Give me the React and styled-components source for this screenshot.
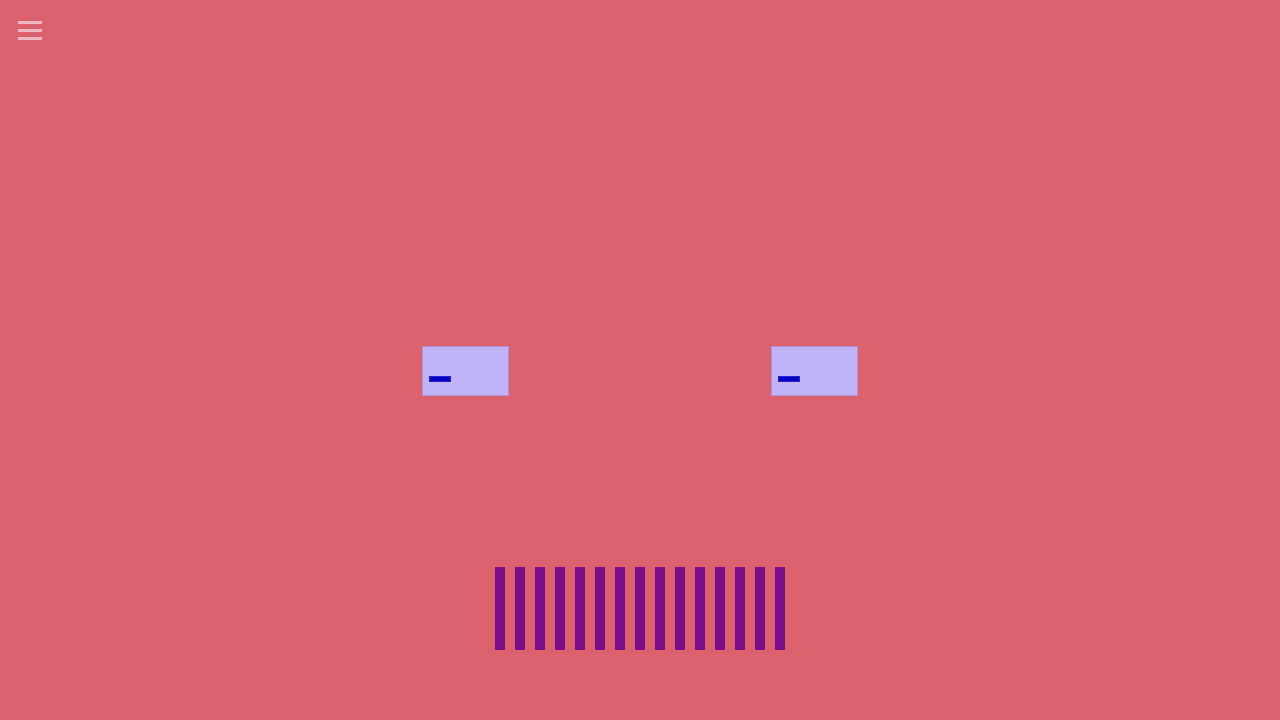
import React from 'react';
import styled, { createGlobalStyle } from 'styled-components';

const GlobalStyle = createGlobalStyle`
  html, body {
    margin: 0;
    padding: 0;
    background: #dc626e;
    font-family: 'Liberation Sans', Arial, sans-serif;
  }
`;

const Page = styled.div`
  display: flex;
  flex-direction: column;
  min-height: 100vh;
  background: #dc626e;
`;

const TopBar = styled.div`
  display: flex;
  padding: 21px 18px 0 18px;
`;

const MenuButton = styled.button`
  display: flex;
  flex-direction: column;
  gap: 5px;
  width: 24px;
  padding: 0;
  border: none;
  background: transparent;
  cursor: pointer;
`;

const MenuLine = styled.span`
  display: block;
  width: 24px;
  height: 3px;
  background: #f1b8c2;
`;

const Face = styled.div`
  display: flex;
  flex-direction: column;
  align-items: center;
`;

const EyesRow = styled.div`
  display: flex;
  justify-content: center;
  gap: 262px;
  margin-top: 306px;
`;

const Eye = styled.div`
  box-sizing: border-box;
  width: 87px;
  height: 50px;
  padding: 29px 0 0 6px;
  background: #c0b3f7;
  border: 1px solid #b38fd4;
`;

const Pupil = styled.div`
  box-sizing: border-box;
  width: 22px;
  height: 6px;
  background: #0000c2;
  border: 1px solid #2a22d0;
`;

const Mouth = styled.div`
  display: flex;
  gap: 10px;
  margin-top: 171px;
`;

const Tooth = styled.div`
  width: 10px;
  height: 83px;
  background: #7b0d8a;
`;

export default function App() {
  return (
    <>
      <GlobalStyle />
      <Page>
        <TopBar>
          <MenuButton aria-label="menu">
            <MenuLine />
            <MenuLine />
            <MenuLine />
          </MenuButton>
        </TopBar>
        <Face>
          <EyesRow>
            <Eye>
              <Pupil />
            </Eye>
            <Eye>
              <Pupil />
            </Eye>
          </EyesRow>
          <Mouth>
            {Array.from({ length: 15 }).map((_, i) => (
              <Tooth key={i} />
            ))}
          </Mouth>
        </Face>
      </Page>
    </>
  );
}
